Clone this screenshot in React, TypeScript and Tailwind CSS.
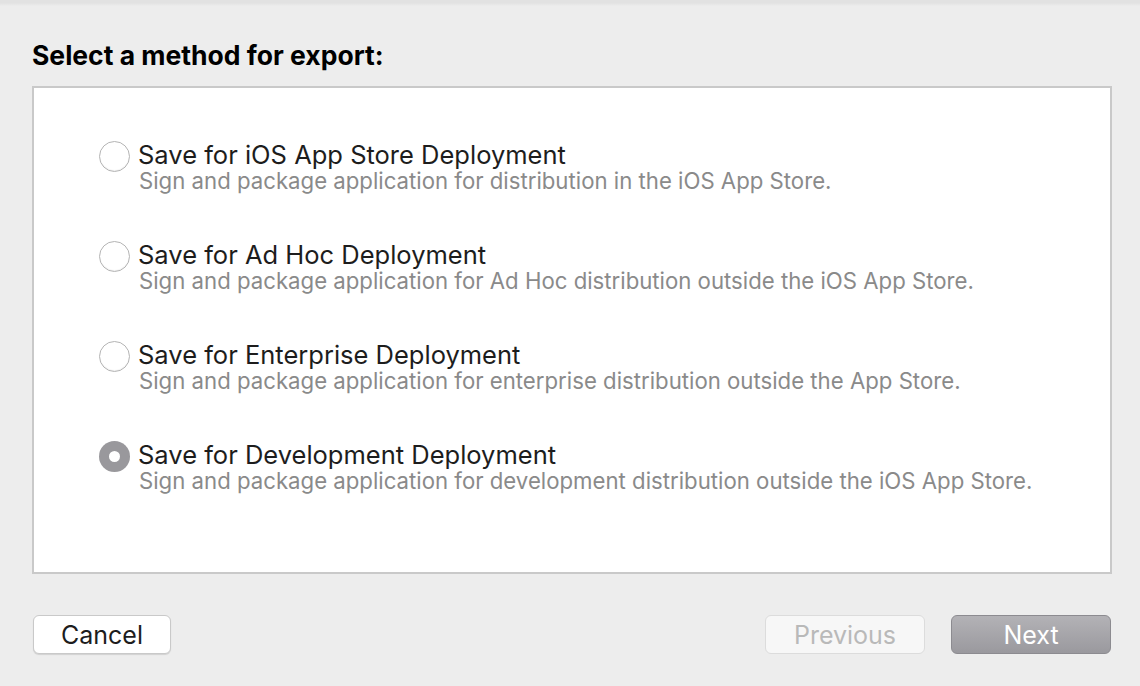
import React, { useState } from 'react';

const options = [
  {
    id: 'appstore',
    title: 'Save for iOS App Store Deployment',
    description: 'Sign and package application for distribution in the iOS App Store.',
  },
  {
    id: 'adhoc',
    title: 'Save for Ad Hoc Deployment',
    description: 'Sign and package application for Ad Hoc distribution outside the iOS App Store.',
  },
  {
    id: 'enterprise',
    title: 'Save for Enterprise Deployment',
    description: 'Sign and package application for enterprise distribution outside the App Store.',
  },
  {
    id: 'development',
    title: 'Save for Development Deployment',
    description: 'Sign and package application for development distribution outside the iOS App Store.',
  },
];

function Radio({ checked }: { checked: boolean }) {
  if (checked) {
    return (
      <span className="flex h-[31px] w-[31px] shrink-0 items-center justify-center rounded-full bg-[#99989c]">
        <span className="h-[11px] w-[11px] rounded-full bg-white" />
      </span>
    );
  }
  return (
    <span className="block h-[31px] w-[31px] shrink-0 rounded-full border border-[#b4b4b4] bg-white shadow-[inset_0_-1px_1px_rgba(0,0,0,0.06)]" />
  );
}

export default function App() {
  const [selected, setSelected] = useState('development');

  return (
    <div
      className="h-[686px] w-[1140px] bg-[#ededed] bg-[linear-gradient(#e2e2e2_0,#e2e2e2_3px,#ededed_6px)]"
      style={{ fontFamily: 'Inter, "Liberation Sans", sans-serif' }}
    >
      <div className="pl-[32px] pr-[28px] pt-[39px]">
        <h1 className="text-[26.5px] font-bold leading-[32px] text-black">Select a method for export:</h1>

        <div className="mt-[15px] h-[488px] border-2 border-[#c9c9c9] bg-white pl-[65px] pt-[53px]">
          <div className="flex flex-col">
            {options.map((o) => (
              <button
                key={o.id}
                type="button"
                onClick={() => setSelected(o.id)}
                className="flex h-[100px] items-start gap-[8px] text-left"
              >
                <span>
                  <Radio checked={selected === o.id} />
                </span>
                <span className="flex flex-col">
                  <span className="text-[25.5px] leading-[28px] text-[#1d1d1d]">{o.title}</span>
                  <span className="pl-[1px] text-[22.2px] leading-[24px] text-[#8a8a8a]">{o.description}</span>
                </span>
              </button>
            ))}
          </div>
        </div>

        <div className="mt-[41px] flex items-center">
          <button
            type="button"
            className="ml-[1px] h-[39px] w-[138px] rounded-[6px] border border-[#c9c9c9] bg-white pt-[1px] text-[25px] text-[#1d1d1d] shadow-[0_1px_1px_rgba(0,0,0,0.12)]"
          >
            Cancel
          </button>
          <div className="ml-auto mr-[1px] flex gap-[26px]">
            <button
              type="button"
              disabled
              className="h-[39px] w-[160px] rounded-[6px] border border-[#dcdcdc] bg-[#f7f7f7] pt-[1px] text-[25px] text-[#b9b9b9]"
            >
              Previous
            </button>
            <button
              type="button"
              className="h-[39px] w-[160px] rounded-[6px] border border-[#8c8b90] bg-[linear-gradient(#b3b2b6,#9a999e)] pt-[1px] text-[25px] text-white"
            >
              Next
            </button>
          </div>
        </div>
      </div>
    </div>
  );
}
